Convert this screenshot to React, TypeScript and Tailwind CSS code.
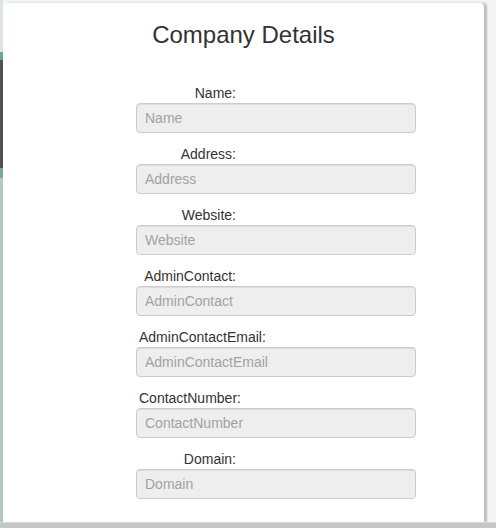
import React from "react";

const fields = [
  "Name",
  "Address",
  "Website",
  "AdminContact",
  "AdminContactEmail",
  "ContactNumber",
  "Domain",
];

function Field({ name }: { name: string }) {
  return (
    <div className="flex flex-col">
      <label className="ml-[3px] block w-[97px] whitespace-nowrap text-right text-[14px] leading-[16px] text-[#333]">
        {name}:
      </label>
      <input
        readOnly
        placeholder={name}
        className="mt-[2px] h-[30px] w-[280px] rounded-[4px] border border-[#cccccc] bg-[#eeeeee] pl-[8px] text-[14px] text-[#555] shadow-[inset_0_1px_1px_rgba(0,0,0,0.075)] outline-none placeholder:text-[#a2a2a2]"
      />
    </div>
  );
}

export default function App() {
  return (
    <div className="flex h-[528px] w-[496px] flex-col overflow-hidden bg-[#f3f4f4] font-['Liberation_Sans',Arial,sans-serif]">
      <div className="flex h-[522px]">
        {/* strip of the page behind, peeking through on the left */}
        <div className="flex w-[3px] flex-col">
          <div className="h-[52px] bg-[#dce6e2]" />
          <div className="h-[8px] bg-[#6fa596]" />
          <div className="h-[108px] bg-[#4d514f]" />
          <div className="h-[10px] bg-[#7aa89b]" />
          <div className="flex-1 bg-[#b3c8be]" />
        </div>

        <div className="flex flex-1 flex-col">
          <div className="h-[3px]" />
          <div className="flex flex-1">
            <div className="w-[481px] rounded-t-[4px] bg-white pt-[20px] shadow-[3px_0_2px_rgba(0,0,0,0.22)]">
              <h1 className="text-center text-[24px] leading-[24px] text-[#333]">
                Company Details
              </h1>
              <form className="mt-[38px] flex flex-col gap-[13px] pl-[133px]">
                {fields.map((f) => (
                  <Field key={f} name={f} />
                ))}
              </form>
            </div>
          </div>
        </div>
      </div>
      <div className="h-[6px] border-t border-[#dadada] bg-[#c6c6c6]" />
    </div>
  );
}
